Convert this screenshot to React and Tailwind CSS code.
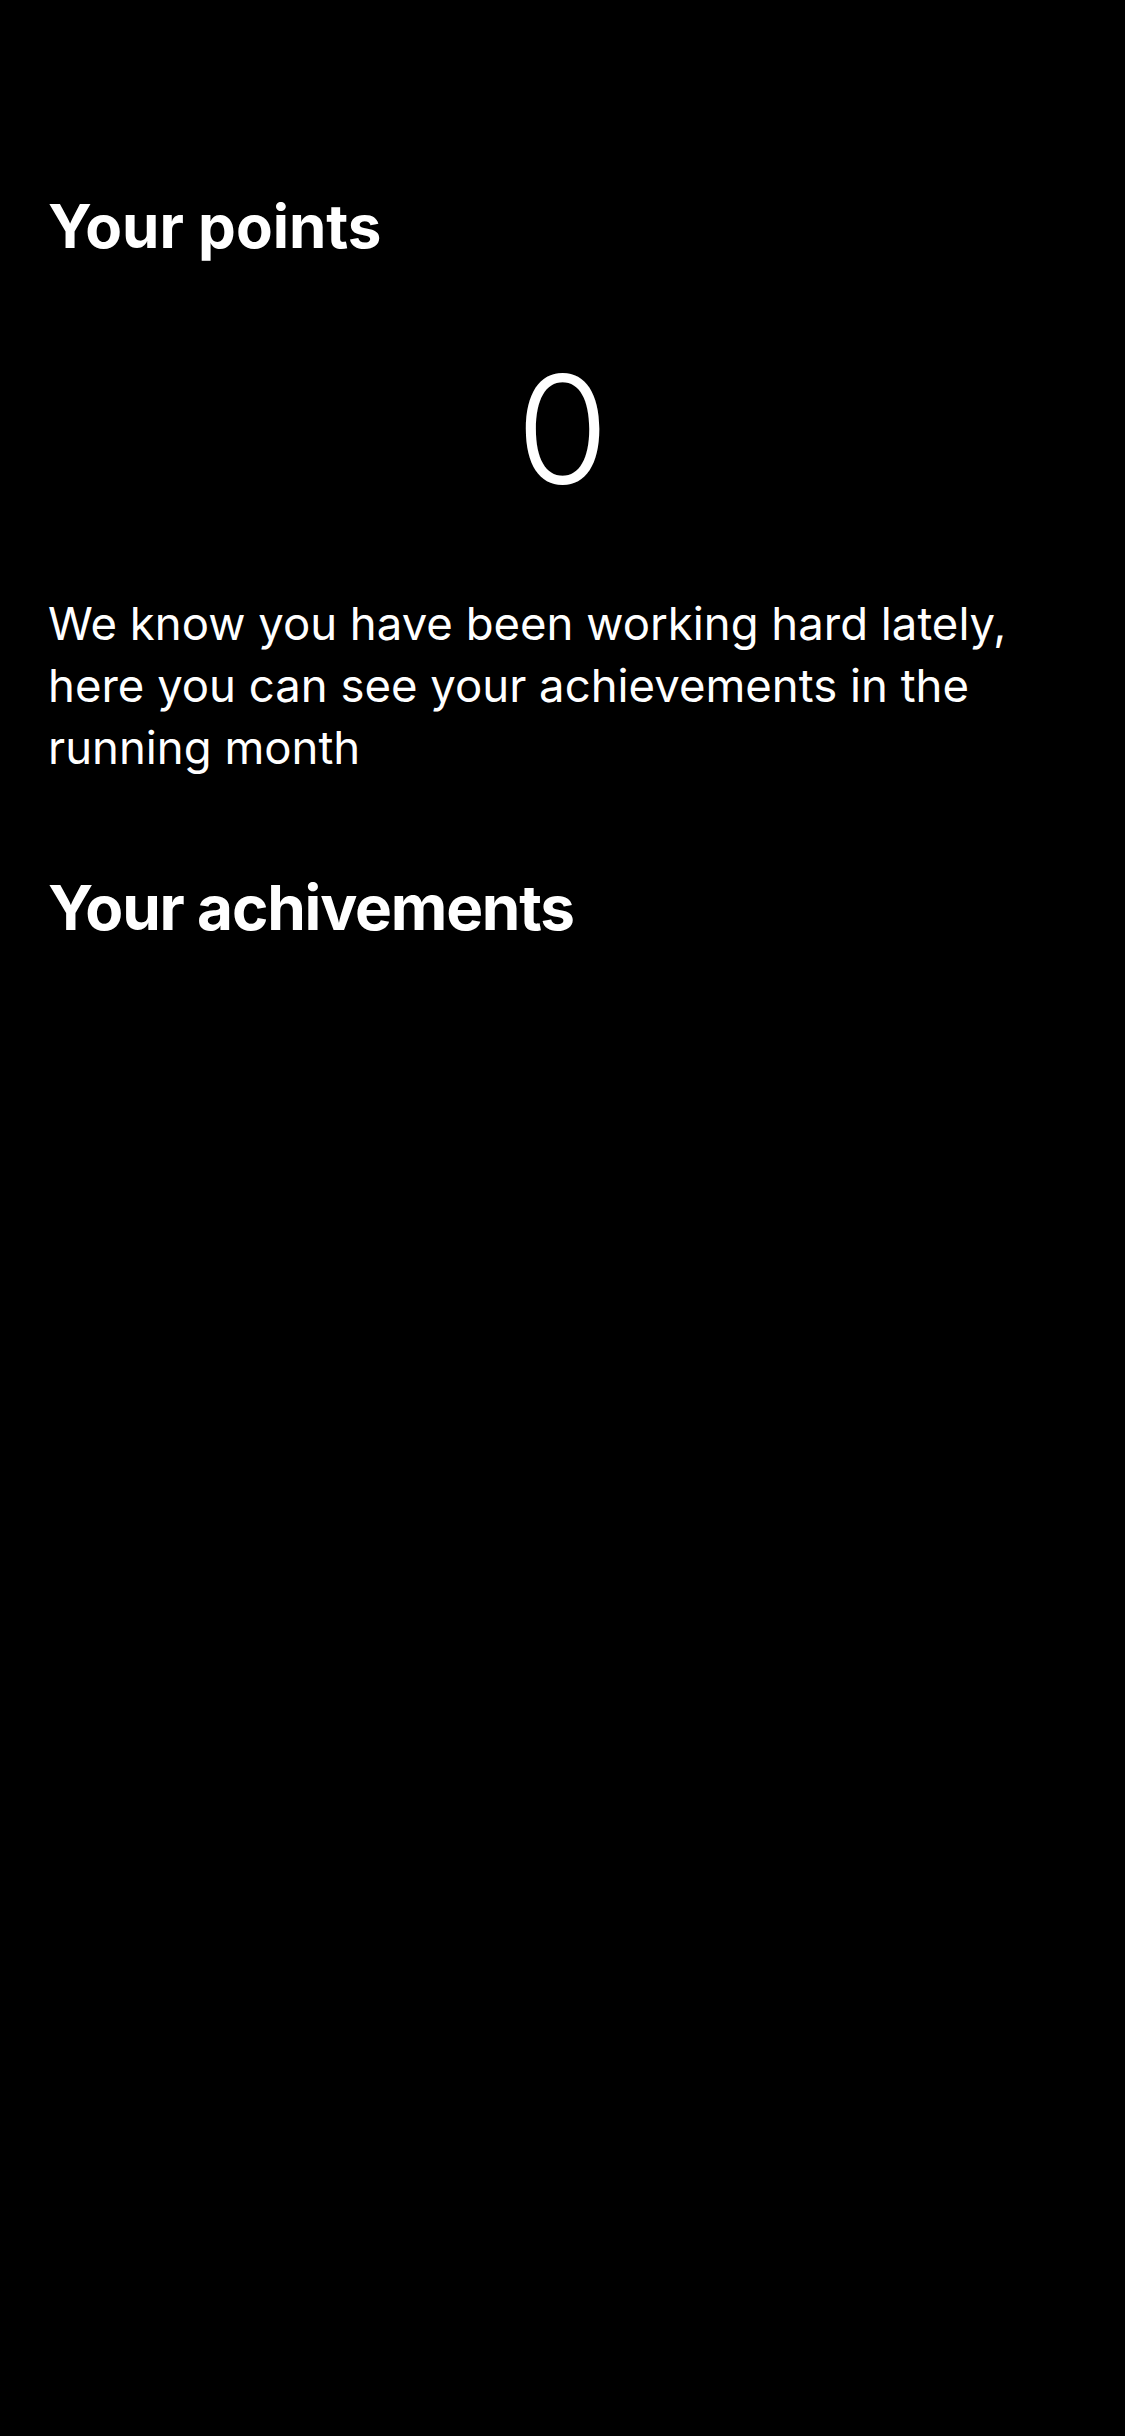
export default function App() {
    return (
        <div className="min-h-screen w-full bg-black text-white" style={{ fontFamily: 'Inter, "Liberation Sans", sans-serif' }}>
            <div className="px-12 pt-[190px]">
                {/* points header */}
                <h1 className="text-[60px] font-bold leading-[72px]">Your points</h1>

                <div className="mt-[93px] text-center text-[150px] font-light leading-none">0</div>

                <p className="mt-[88px] text-[45.5px] leading-[62px]">
                    We know you have been working hard lately, here you can see your achievements in the running month
                </p>

                {/* achievements */}
                <h2 className="mt-[91px] text-[62px] font-bold leading-[76px] tracking-[-1.2px]">Your achivements</h2>
            </div>
        </div>
    );
}
